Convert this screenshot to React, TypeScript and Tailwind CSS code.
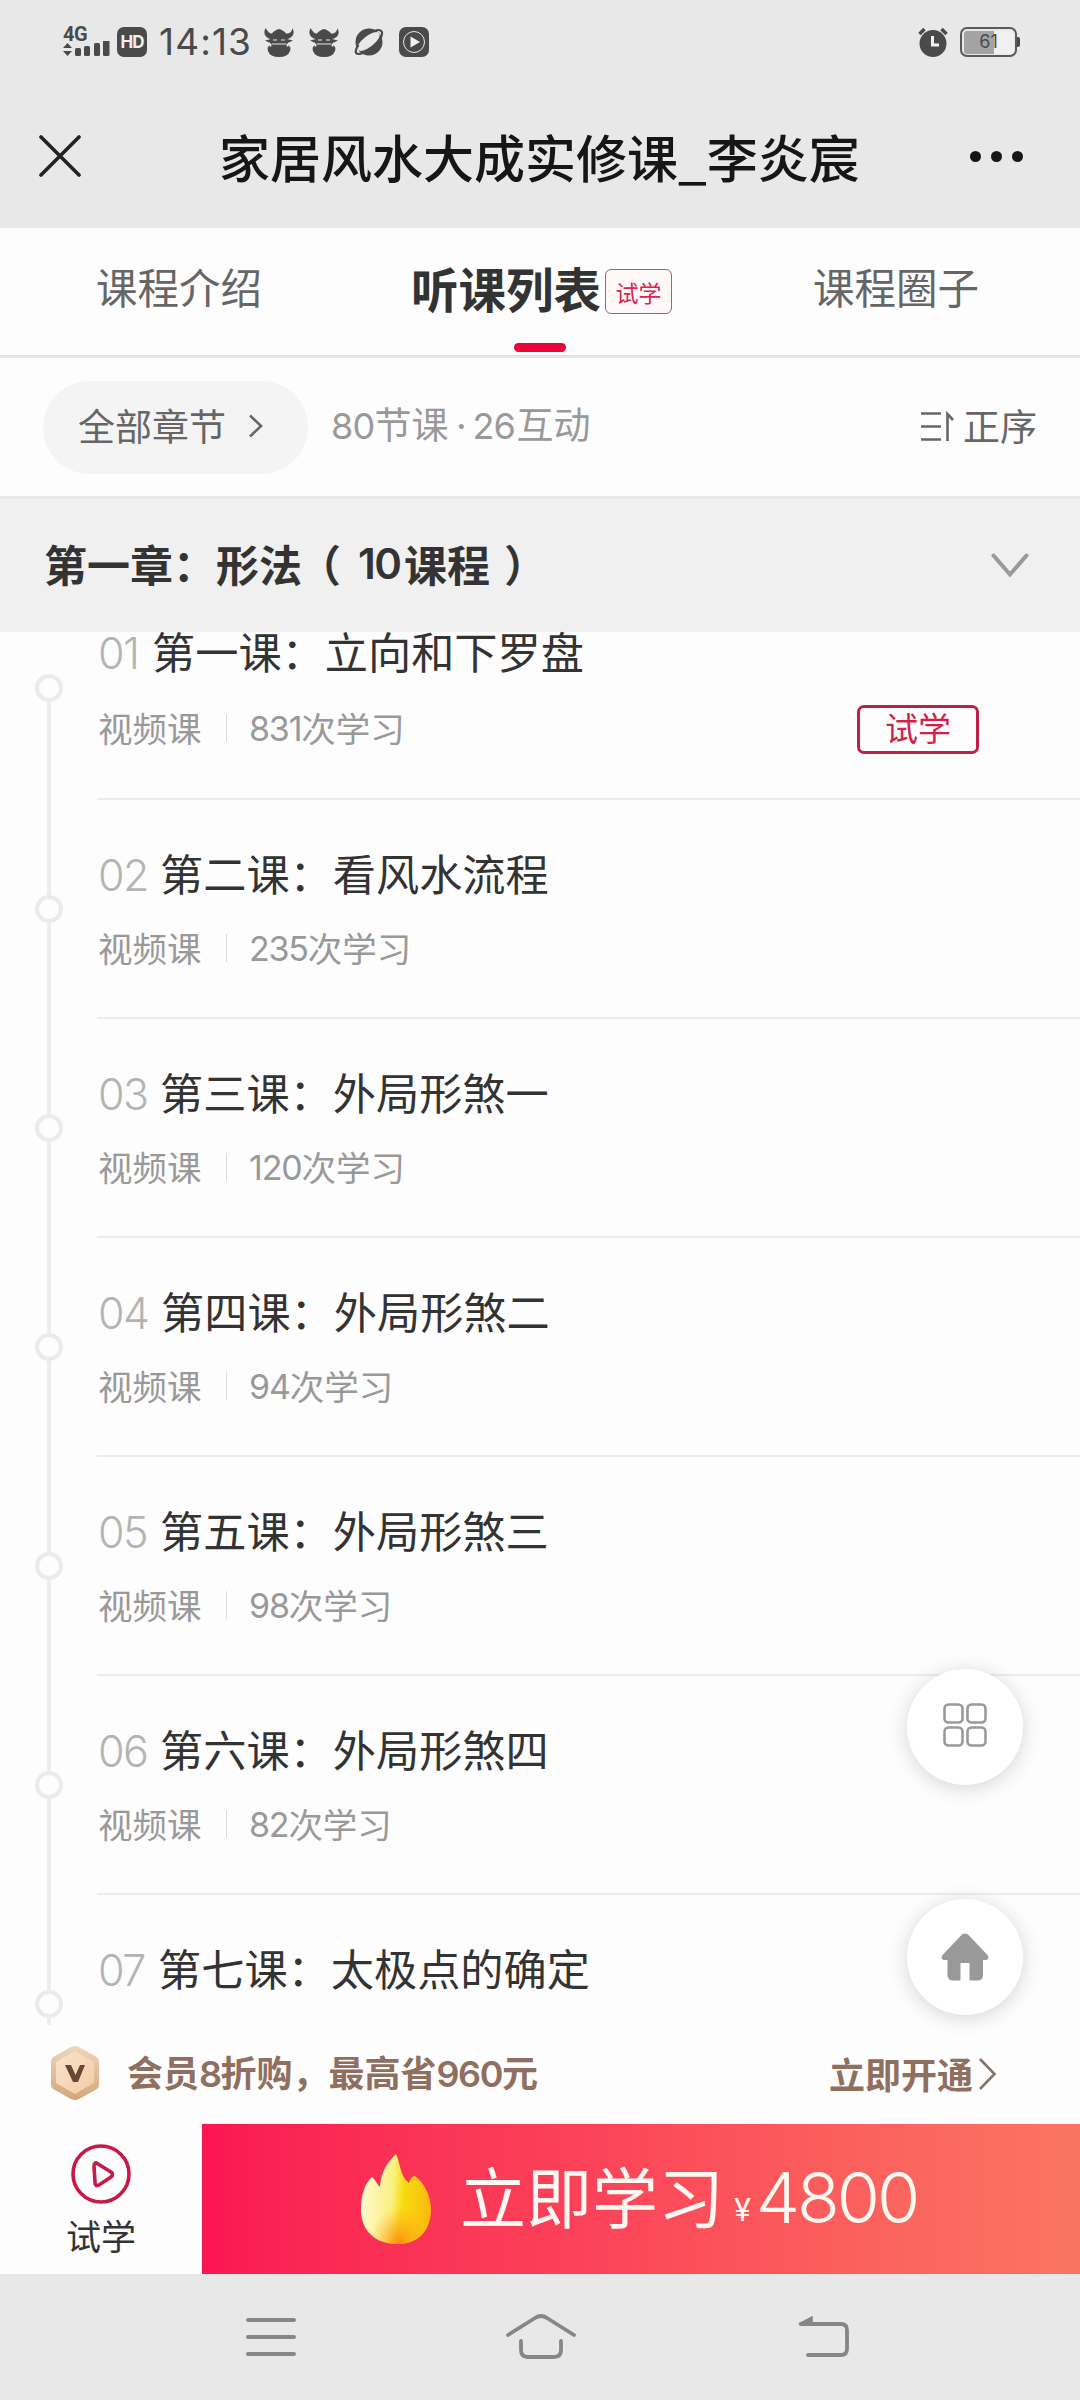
const DARK = "#4a4a4a";

function BullIcon() {
  return (
    <svg width="30" height="30" viewBox="0 0 30 30" fill={DARK}>
      <path d="M1.500 1C-1.500 7 2 11 7 12L1 13.500 5 15.500H25L29 13.500 23 12C28 11 31.500 7 28.500 1 28 5 25 7 22 6.500Q20 3.500 15 2 10 3.500 8 6.500 5 7 1.500 1Z" />
      <path d="M6 15H24V18Q27.500 20 26 24 24 30 15 30 6 30 4 24 2.500 20 6 18Z" />
      <path d="M9 13H13M17 13H21M8 17H22" stroke="#e8e8e8" strokeWidth="1.200" />
      <path d="M6.500 16.500V19.500M23.500 16.500V19.500" stroke="#e8e8e8" strokeWidth="1.800" />
    </svg>
  );
}

function StatusBar() {
  return (
    <div className="flex h-[84px] items-center pl-[63px] pr-[60px]">
      <div className="flex h-[33px] w-[48px] flex-col">
        <span className="h-[15px] font-['Roboto'] text-[20px] leading-[16px] font-bold tracking-[-0.5px] text-[#4a4a4a]">4G</span>
        <svg width="48" height="16" viewBox="0 0 48 16" fill={DARK}>
          <path d="M0 7 4.500 2 9 7ZM0 10H9L4.500 15Z" />
          <rect x="12" y="7" width="6" height="8" rx="1.500" />
          <rect x="21" y="5" width="6" height="10" rx="1.500" />
          <rect x="31" y="2" width="6" height="13" rx="1.500" />
          <rect x="40" y="-1" width="6.500" height="16" rx="1.500" />
        </svg>
      </div>
      <div className="ml-[6px] flex h-[30px] w-[30px] items-center justify-center rounded-[7px] bg-[#4a4a4a] font-['Inter'] text-[17px] leading-none font-bold tracking-[-1px] text-[#f0f0f0]">HD</div>
      <div className="ml-[12px] w-[93px] font-['Inter'] text-[37px] leading-[40px] tracking-[1.1px] whitespace-nowrap text-[#4a4a4a]">14:13</div>
      <div className="ml-[12px] flex gap-[15px]">
        <BullIcon />
        <BullIcon />
        <svg width="30" height="30" viewBox="0 0 30 30">
          <circle cx="15" cy="15" r="13.500" fill={DARK} />
          <ellipse cx="14.500" cy="14.500" rx="13.500" ry="5.500" transform="rotate(-38 14.500 14.500)" fill="#e8e8e8" />
          <path d="M25.500 13C31 4 27 1.500 20 4M4.500 18C-1 26 2 29 10 25.500" fill="none" stroke={DARK} strokeWidth="2.200" />
        </svg>
        <svg width="30" height="30" viewBox="0 0 30 30">
          <rect width="30" height="30" rx="7" fill={DARK} />
          <circle cx="15" cy="15" r="10.500" fill="none" stroke="#e8e8e8" />
          <path d="M11.500 9.500 21 15 11.500 20.500Z" fill="#f2f2f2" />
        </svg>
      </div>
      <div className="ml-auto flex items-center">
        <svg className="mr-[12px]" width="30" height="30" viewBox="0 0 30 30">
          <circle cx="15" cy="16.500" r="13.500" fill={DARK} />
          <path d="M1.500 7 6.500 2M28.500 7 23.500 2" stroke={DARK} strokeWidth="3.500" />
          <path d="M14.500 9V18H21" fill="none" stroke="#f2f2f2" strokeWidth="3" />
        </svg>
        <div className="flex h-[30px] w-[57px] rounded-[7px] border-[2.5px] border-[#5a5a5a] p-[1.5px]">
          <div className="flex h-full w-full items-center justify-center rounded-[3px] bg-linear-to-r from-[#a3a3a3] from-60% to-[#f0f0f0] to-60% font-['Inter'] text-[18px] leading-none text-[#4a4a4a]">61</div>
        </div>
        <div className="h-[10px] w-[3px] rounded-r-[2px] bg-[#4a4a4a]" />
      </div>
    </div>
  );
}

function TitleBar() {
  return (
    <div className="flex h-[144px] items-center pb-0 pl-[39px]">
      <svg className="-mt-[1px]" width="42" height="42" viewBox="0 0 42 42" fill="none" stroke="#222" strokeWidth="3.600" strokeLinecap="round">
        <path d="M2 2 40 40M40 2 2 40" />
      </svg>
      <h1 className="ml-[138px] w-[660px] text-[51px] leading-[60px] font-medium whitespace-nowrap text-[#161616]">家居风水大成实修课_李炎宸</h1>
      <div className="ml-[91px] flex gap-[10px]">
        <span className="h-[11px] w-[11px] rounded-full bg-[#161616]" />
        <span className="h-[11px] w-[11px] rounded-full bg-[#161616]" />
        <span className="h-[11px] w-[11px] rounded-full bg-[#161616]" />
      </div>
    </div>
  );
}

function Tabs() {
  return (
    <div className="flex h-[130px] items-start border-b-[3px] border-[#e4e4e4] text-[41.500px] leading-[60px] whitespace-nowrap text-[#666]">
      <div className="w-[411px] pt-[28px] pl-[96px]">课程介绍</div>
      <div className="relative flex w-[402px] pt-[30px]">
        <span className="text-[47.500px] font-bold text-[#333]">听课列表</span>
        <span className="mt-[11px] ml-[4px] flex h-[45px] w-[67px] items-center justify-center rounded-[6px] border border-[#a8606c] bg-[#fff8f8] pt-[2px] text-[23px] leading-none text-[#dc2250]">试学</span>
        <span className="absolute top-[115px] left-[103px] h-[9px] w-[52px] rounded-full bg-[#ea0437]" />
      </div>
      <div className="pt-[28px]">课程圈子</div>
    </div>
  );
}

function FilterRow() {
  return (
    <div className="flex h-[138px] items-center pr-[43px] pl-[43px] text-[37px] leading-[50px] whitespace-nowrap text-[#666]">
      <div className="flex h-[93px] w-[265px] items-center rounded-full bg-[#f4f4f4] pl-[35px]">
        <span className="-mt-[5px]">全部章节</span>
        <svg className="-mt-[3px] ml-[22px]" width="16" height="24" viewBox="0 0 16 24" fill="none" stroke="#666" strokeWidth="2.600">
          <path d="M2 1.500 13 12 2 22.500" />
        </svg>
      </div>
      <div className="-mt-[5px] ml-[23px] text-[#999]">
        <span className="font-['Inter'] text-[36px] tracking-[-0.8px]">80</span>节课<span className="inline-block w-[26px] text-center font-['Inter']">·</span>
        <span className="-ml-[2px] inline-block w-[44px] font-['Inter'] text-[36px] tracking-[-0.8px]">26</span>互动
      </div>
      <svg className="ml-auto" width="34" height="32" viewBox="0 0 34 32" fill="none" stroke="#666" strokeWidth="2.600">
        <path d="M0 2.500H20M0 15.500H20M0 28.500H20M26.500 30V3L32 9" />
      </svg>
      <span className="-mt-[5px] ml-[8px]">正序</span>
    </div>
  );
}

function ChapterHeader() {
  return (
    <div className="flex h-[136px] items-center justify-between border-t-[3px] border-[#e8e8e8] bg-[#f0f0f0] pr-[51px] pl-[44px]">
      <h2 className="-mt-[5px] flex text-[43px] leading-[60px] font-bold whitespace-nowrap text-[#333]">
        <span className="w-[259px]">第一章：形法</span>
        <span className="-ml-[5px] w-[60px]">（</span>
        <span className="w-[46px] pt-px font-['Inter'] text-[42px] font-semibold tracking-[-1.500px]">10</span>
        <span>课程</span>
        <span className="ml-[14px]">）</span>
      </h2>
      <svg width="38" height="26" viewBox="0 0 38 26" fill="none" stroke="#999" strokeWidth="4" strokeLinecap="round">
        <path d="M2.500 2.500 19 21.500 35.500 2.500" />
      </svg>
    </div>
  );
}

type Lesson = { no: string; title: string; count: string; noWidth: string };

const lessons: Lesson[] = [
  { no: "01", title: "第一课：立向和下罗盘", count: "831", noWidth: "w-[55px]" },
  { no: "02", title: "第二课：看风水流程", count: "235", noWidth: "w-[63px]" },
  { no: "03", title: "第三课：外局形煞一", count: "120", noWidth: "w-[63px]" },
  { no: "04", title: "第四课：外局形煞二", count: "94", noWidth: "w-[64px]" },
  { no: "05", title: "第五课：外局形煞三", count: "98", noWidth: "w-[63px]" },
  { no: "06", title: "第六课：外局形煞四", count: "82", noWidth: "w-[63px]" },
  { no: "07", title: "第七课：太极点的确定", count: "", noWidth: "w-[61px]" },
];

function LessonRow({ lesson, first, last }: { lesson: Lesson; first: boolean; last: boolean }) {
  return (
    <div className={first ? "flex h-[168px]" : last ? "flex h-[130px]" : "flex h-[219px]"}>
      <div className="flex w-[97px] flex-col items-center">
        <div className={first ? "h-[42px]" : "h-[95px] w-[4px] bg-[#ededed]"} />
        <div className="h-[28px] w-[28px] shrink-0 rounded-full border-[4px] border-[#ebebeb]" />
        <div className="w-[4px] flex-1 bg-[#ededed]" />
      </div>
      <div className={last ? "flex flex-1" : "flex flex-1 border-b-2 border-[#ececec]"}>
        <div className={first ? "-mt-[4px]" : "pt-[50px]"}>
          <div className="flex h-[44px] items-center text-[43.200px] leading-[44px] whitespace-nowrap text-[#333]">
            <span className={`${lesson.noWidth} pt-[6px] pl-px font-['Inter'] text-[43px] font-light tracking-[-1.500px] text-[#b4b4b4]`}>{lesson.no}</span>
            <span>{lesson.title}</span>
          </div>
          {!last && (
            <div className={`${first ? "mt-[33px]" : "mt-[31px]"} flex h-[44px] items-center text-[34.500px] leading-[44px] whitespace-nowrap text-[#999]`}>
              <span className="ml-px w-[128px]">视频课</span>
              <span className="mt-[2px] h-[28px] w-px bg-[#dcdcdc]" />
              <span className="mt-[3px] ml-[22px] font-['Inter'] text-[34px] tracking-[-1.200px]">{lesson.count}</span>
              <span>次学习</span>
            </div>
          )}
        </div>
        {first && (
          <div className="mt-[73px] mr-[101px] ml-auto flex h-[49px] w-[122px] items-center justify-center rounded-[7px] border-3 border-[#c01f48] pb-[4px] text-[33px] leading-none text-[#d51f4b]">试学</div>
        )}
      </div>
    </div>
  );
}

function FloatingButtons() {
  return (
    <div className="absolute top-[1037px] right-[57px] flex flex-col gap-[114px]">
      <button className="flex h-[116px] w-[116px] items-center justify-center rounded-full bg-white pb-[4px] shadow-[0_3px_20px_rgba(0,0,0,0.16)]">
        <svg width="44" height="44" viewBox="0 0 44 44" fill="none" stroke="#999" strokeWidth="2.600">
          <rect x="1.500" y="1.500" width="18" height="18" rx="4" />
          <rect x="24.500" y="1.500" width="18" height="18" rx="4" />
          <rect x="1.500" y="24.500" width="18" height="18" rx="4" />
          <rect x="24.500" y="24.500" width="18" height="18" rx="4" />
        </svg>
      </button>
      <button className="flex h-[116px] w-[116px] items-center justify-center rounded-full bg-white shadow-[0_3px_20px_rgba(0,0,0,0.16)]">
        <svg width="48" height="48" viewBox="0 0 48 48" fill="#999">
          <path d="M21 1.500Q24-.5 27 1.500L46.500 22Q49 26.500 45 27H42V42Q42 47.500 36.500 47.500H28.500V30H19.500V47.500H12Q6.500 47.500 6.500 42V27H3Q-1 26.500 1.500 22Z" />
        </svg>
      </button>
    </div>
  );
}

function MemberBar() {
  return (
    <div className="flex h-[100px] items-center pr-[83px] pl-[49px] text-[36px] leading-[50px] font-bold whitespace-nowrap text-[#8f6f60]">
      <svg className="-mt-[2px]" width="52" height="56" viewBox="0 0 52 56">
        <defs>
          <linearGradient id="hexEdge" x1="0" y1="0" x2="0" y2="1">
            <stop offset="0" stopColor="#efd6be" />
            <stop offset="1" stopColor="#d3a679" />
          </linearGradient>
          <linearGradient id="hexFace" x1="0" y1="0" x2="1" y2="1">
            <stop offset="0" stopColor="#fbe3cc" />
            <stop offset="1" stopColor="#f2cba6" />
          </linearGradient>
        </defs>
        <path d="M22 2Q26 0 30 2L47 11.500Q50 13.500 50 17V39Q50 42.500 47 44.500L30 54Q26 56 22 54L5 44.500Q2 42.500 2 39V17Q2 13.500 5 11.500Z" fill="url(#hexEdge)" />
        <path d="M26 6 45 17V38L26 49 7 38V17Z" fill="url(#hexFace)" />
        <path d="M16 20H22L26.500 30 31 20H36L29 37H24Z" fill="#6a4636" />
      </svg>
      <div className="-mt-[3px] ml-[26px]">
        会员<span className="font-['Inter'] font-semibold tracking-[-1.500px]">8</span>折购，最高省<span className="font-['Inter'] font-semibold tracking-[-1.500px]">960</span>元
      </div>
      <div className="-mt-[3px] ml-auto">立即开通</div>
      <svg className="ml-[5px]" width="19" height="34" viewBox="0 0 19 34" fill="none" stroke="#8a7468" strokeWidth="2.600">
        <path d="M2 2 16.500 17 2 32" />
      </svg>
    </div>
  );
}

function Flame() {
  return (
    <svg width="72" height="92" viewBox="0 0 72 92">
      <defs>
        <linearGradient id="flameBase" x1="0" y1="0.400" x2="1" y2="0.500">
          <stop offset="0" stopColor="#fffbd0" />
          <stop offset="0.450" stopColor="#faf080" />
          <stop offset="0.600" stopColor="#f8dc10" />
          <stop offset="1" stopColor="#fbb90c" />
        </linearGradient>
        <radialGradient id="flameGlow" cx="0.550" cy="1" r="0.420">
          <stop offset="0" stopColor="#ff8a10" />
          <stop offset="1" stopColor="#ffb020" stopOpacity="0" />
        </radialGradient>
      </defs>
      <path d="M36 1C40 8 40 24 49 30 50 27 51 24 55 23 63 29 71 41 71 58 70 80 57 91 37 91 15 91 1 77 1 57 1 42 5 30 12 24 15 26 17 31 20 34 21 18 28 9 36 1Z" fill="url(#flameBase)" />
      <path d="M36 1C40 8 40 24 49 30 50 27 51 24 55 23 63 29 71 41 71 58 70 80 57 91 37 91 15 91 1 77 1 57 1 42 5 30 12 24 15 26 17 31 20 34 21 18 28 9 36 1Z" fill="url(#flameGlow)" />
    </svg>
  );
}

function PurchaseBar() {
  return (
    <div className="flex h-[150px]">
      <div className="flex w-[202px] flex-col items-center pt-[20px]">
        <svg width="60" height="60" viewBox="0 0 60 60" fill="none" stroke="#c81a48" strokeWidth="3.600">
          <circle cx="30" cy="30" r="28" />
          <path d="M23 22Q23 17 27 20L40 28Q43 30.500 40 33L28 41Q24 43 24 38Z" strokeLinejoin="round" />
        </svg>
        <span className="mt-[9px] text-[35px] leading-[44px] text-[#333]">试学</span>
      </div>
      <button className="flex flex-1 items-center bg-linear-to-r from-[#fa1552] via-[#fb4359] via-45% to-[#fa7561] pl-[158px] whitespace-nowrap text-[#fff8f0]">
        <Flame />
        <span className="-mt-[10px] ml-[28px] text-[66px] leading-[80px]">立即学习</span>
        <span className="mt-[22px] ml-[10px] font-['Inter'] text-[31px] leading-[40px]">¥</span>
        <span className="-mt-[2px] ml-[5px] font-['Inter'] text-[70px] leading-[80px] font-[350] tracking-[-3px]">4800</span>
      </button>
    </div>
  );
}

function SystemNav() {
  return (
    <div className="flex h-[126px] items-center bg-[#e8e8e8] pl-[246px]">
      <svg width="50" height="44" viewBox="0 0 50 44" fill="none" stroke="#868686" strokeWidth="4" strokeLinecap="round">
        <path d="M2 5H48M2 22H48M2 39H48" />
      </svg>
      <svg className="ml-[209px]" width="72" height="46" viewBox="0 0 72 46" fill="none" stroke="#868686" strokeWidth="3.800" strokeLinecap="round">
        <path d="M3 21 30 4Q36 0 42 4L69 21M16 27V36Q16 43 23 43H49Q56 43 56 36V27" />
      </svg>
      <svg className="ml-[220px]" width="54" height="44" viewBox="0 0 54 44" fill="none" stroke="#868686" strokeWidth="3.800" strokeLinecap="round">
        <path d="M4 9H44Q50 9 50 15V34Q50 40 44 40H11" />
        <path d="M2 9 15 2V9Z" fill="#868686" strokeWidth="1.500" />
      </svg>
    </div>
  );
}

export default function App() {
  return (
    <div className="flex h-[2400px] w-[1080px] flex-col overflow-hidden bg-[#fdfdfd] font-['Noto_Sans_CJK_SC',sans-serif]">
      <header className="h-[228px] bg-[#e8e8e8]">
        <StatusBar />
        <TitleBar />
      </header>
      <Tabs />
      <FilterRow />
      <ChapterHeader />
      <main className="relative h-[1392px]">
        {lessons.map((lesson, i) => (
          <LessonRow key={lesson.no} lesson={lesson} first={i === 0} last={i === lessons.length - 1} />
        ))}
        <FloatingButtons />
      </main>
      <MemberBar />
      <PurchaseBar />
      <SystemNav />
    </div>
  );
}
